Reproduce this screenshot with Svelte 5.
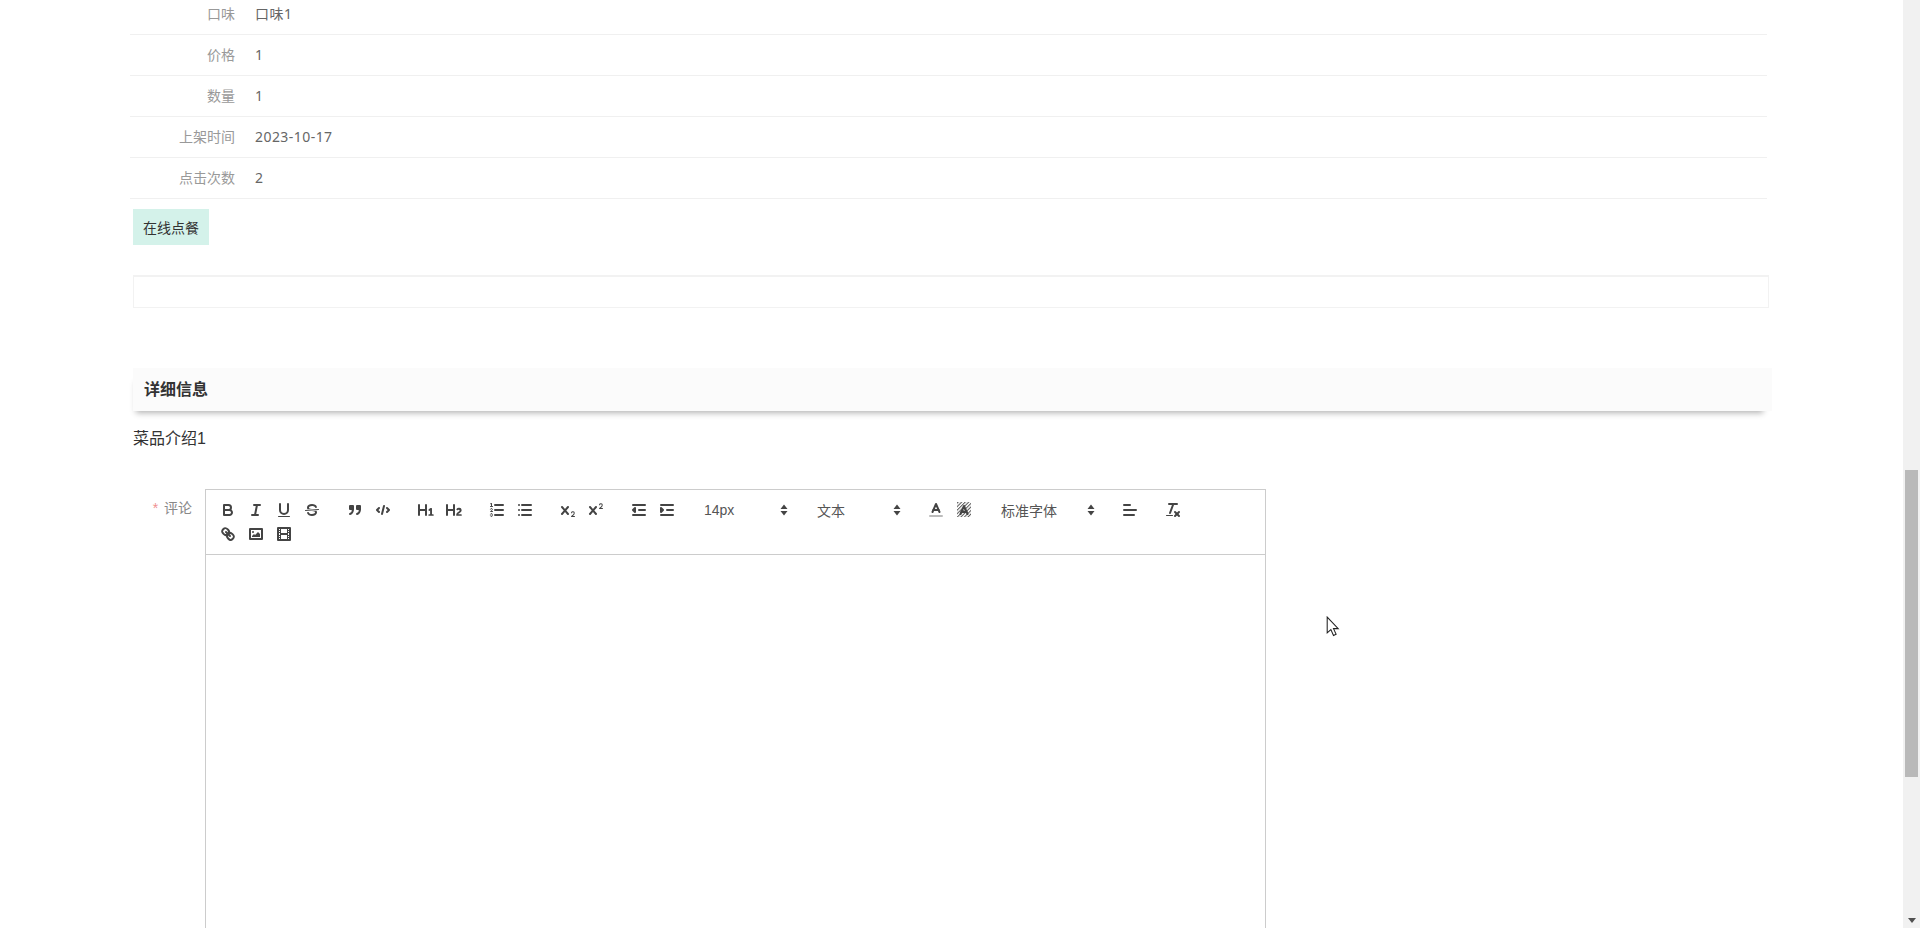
<script>
  const rows = [
    { label: '口味', value: '口味1' },
    { label: '价格', value: '1' },
    { label: '数量', value: '1' },
    { label: '上架时间', value: '2023-10-17' },
    { label: '点击次数', value: '2' }
  ];
</script>

<div class="page">
  <main class="content">
    <section class="detail-table">
      {#each rows as row}
        <div class="row">
          <span class="row-label">{row.label}</span>
          <span class="row-value">{row.value}</span>
        </div>
      {/each}
    </section>

    <button class="order-btn">在线点餐</button>
    <div class="empty-box"></div>

    <h3 class="section-title">详细信息</h3>
    <p class="intro">菜品介绍1</p>

    <div class="form-item">
      <label class="form-label"><span class="star">*</span> 评论</label>
      <div class="editor">
        <div class="toolbar">
          <span class="formats">
            <button class="tool" aria-label="bold"><svg viewBox="0 0 18 18"><path class="st" d="M5,4H9.5A2.5,2.5,0,0,1,12,6.5v0A2.5,2.5,0,0,1,9.5,9H5A0,0,0,0,1,5,9V4A0,0,0,0,1,5,4Z"/><path class="st" d="M5,9h5.5A2.5,2.5,0,0,1,13,11.5v0A2.5,2.5,0,0,1,10.5,14H5a0,0,0,0,1,0,0V9A0,0,0,0,1,5,9Z"/></svg></button>
            <button class="tool" aria-label="italic"><svg viewBox="0 0 18 18"><line class="st" x1="7" x2="13" y1="4" y2="4"/><line class="st" x1="5" x2="11" y1="14" y2="14"/><line class="st" x1="8" x2="10" y1="14" y2="4"/></svg></button>
            <button class="tool" aria-label="underline"><svg viewBox="0 0 18 18"><path class="st" d="M5,3V9a4.012,4.012,0,0,0,4,4H9a4.012,4.012,0,0,0,4-4V3"/><rect class="fl" height="1" rx="0.5" ry="0.5" width="12" x="3" y="15"/></svg></button>
            <button class="tool" aria-label="strike"><svg viewBox="0 0 18 18"><line class="st thin" x1="15.5" x2="2.5" y1="8.5" y2="9.5"/><path class="fl" d="M9.007,8C6.542,7.791,6,7.519,6,6.5,6,5.792,7.283,5,9,5c1.571,0,2.765.679,2.969,1.309a1,1,0,0,0,1.9-.617C13.356,4.106,11.354,3,9,3,6.2,3,4,4.538,4,6.5a3.2,3.2,0,0,0,.5,1.843Z"/><path class="fl" d="M8.984,10C11.457,10.208,12,10.479,12,11.5c0,.708-1.283,1.5-3,1.5-1.571,0-2.765-.679-2.969-1.309a1,1,0,1,0-1.9.617C4.644,13.894,6.646,15,9,15c2.8,0,5-1.538,5-3.5a3.2,3.2,0,0,0-.5-1.843Z"/></svg></button>
          </span>
          <span class="formats">
            <button class="tool" aria-label="blockquote"><svg viewBox="0 0 18 18"><rect class="fl st" height="3" width="3" x="4" y="5"/><rect class="fl st" height="3" width="3" x="11" y="5"/><path class="st" d="M7,8c0,4.031-3,5-3,5"/><path class="st" d="M14,8c0,4.031-3,5-3,5"/></svg></button>
            <button class="tool" aria-label="code"><svg viewBox="0 0 18 18"><polyline class="st" points="5 7 3 9 5 11"/><polyline class="st" points="13 7 15 9 13 11"/><line class="st" x1="10" x2="8" y1="5" y2="13"/></svg></button>
          </span>
          <span class="formats">
            <button class="tool" aria-label="h1"><svg viewBox="0 0 18 18"><path class="fl" d="M10,4V14a1,1,0,0,1-2,0V10H3v4a1,1,0,0,1-2,0V4A1,1,0,0,1,3,4V8H8V4a1,1,0,0,1,2,0Zm6.06787,9.209H14.98975V7.59863a.54085.54085,0,0,0-.605-.60547h-.62744a1.01119,1.01119,0,0,0-.748.29688L11.645,8.56641a.5435.5435,0,0,0-.022.8584l.28613.30762a.53861.53861,0,0,0,.84717.0332l.09912-.08789a1.2137,1.2137,0,0,0,.2417-.35254h.02246s-.01123.30859-.01123.60547V13.209H12.041a.54085.54085,0,0,0-.605.60547v.43945a.54085.54085,0,0,0,.605.60547h4.02686a.54085.54085,0,0,0,.605-.60547v-.43945A.54085.54085,0,0,0,16.06787,13.209Z"/></svg></button>
            <button class="tool" aria-label="h2"><svg viewBox="0 0 18 18"><path class="fl" d="M16.73975,13.81445v.43945a.54085.54085,0,0,1-.605.60547H11.855a.58392.58392,0,0,1-.64893-.60547V14.0127c0-2.90527,3.39941-3.42187,3.39941-4.55469a.77675.77675,0,0,0-.84717-.78125,1.17684,1.17684,0,0,0-.83594.38477c-.2749.26367-.561.374-.85791.13184l-.4292-.34082c-.30811-.24219-.38525-.51758-.1543-.81445a2.97155,2.97155,0,0,1,2.45361-1.17676,2.45393,2.45393,0,0,1,2.68408,2.40918c0,2.45312-3.1792,2.92676-3.27832,3.93848h2.79443A.54085.54085,0,0,1,16.73975,13.81445ZM9,3A.99974.99974,0,0,0,8,4V8H3V4A1,1,0,0,0,1,4V14a1,1,0,0,0,2,0V10H8v4a1,1,0,0,0,2,0V4A.99974.99974,0,0,0,9,3Z"/></svg></button>
          </span>
          <span class="formats">
            <button class="tool" aria-label="ordered"><svg viewBox="0 0 18 18"><line class="st" x1="7" x2="15" y1="4" y2="4"/><line class="st" x1="7" x2="15" y1="9" y2="9"/><line class="st" x1="7" x2="15" y1="14" y2="14"/><line class="st thin" x1="2.5" x2="4.5" y1="5.5" y2="5.5"/><path class="fl" d="M3.5,6A0.5,0.5,0,0,1,3,5.5V3.085l-0.276.138A0.5,0.5,0,0,1,2.053,3c-0.124-.247-0.023-0.324.224-0.447l1-.5A0.5,0.5,0,0,1,4,2.5v3A0.5,0.5,0,0,1,3.5,6Z"/><path class="st thin" d="M4.5,10.5h-2c0-.234,1.85-1.076,1.85-2.234A0.959,0.959,0,0,0,2.5,8.156"/><path class="st thin" d="M2.5,14.846a0.959,0.959,0,0,0,1.85-.109A0.7,0.7,0,0,0,3.75,14a0.688,0.688,0,0,0,.6-0.736,0.959,0.959,0,0,0-1.85-.109"/></svg></button>
            <button class="tool" aria-label="bullet"><svg viewBox="0 0 18 18"><line class="st" x1="6" x2="15" y1="4" y2="4"/><line class="st" x1="6" x2="15" y1="9" y2="9"/><line class="st" x1="6" x2="15" y1="14" y2="14"/><line class="st" x1="3" x2="3" y1="4" y2="4"/><line class="st" x1="3" x2="3" y1="9" y2="9"/><line class="st" x1="3" x2="3" y1="14" y2="14"/></svg></button>
          </span>
          <span class="formats">
            <button class="tool" aria-label="sub"><svg viewBox="0 0 18 18"><path class="fl" d="M15.5,15H13.861a3.858,3.858,0,0,0,1.914-2.975,1.8,1.8,0,0,0-1.6-1.751A1.921,1.921,0,0,0,12.021,11.7a0.50013,0.50013,0,1,0,.957.291h0a0.914,0.914,0,0,1,1.053-.725,0.81,0.81,0,0,1,.744.762c0,1.076-1.16971,1.86982-1.93971,2.43082A1.45639,1.45639,0,0,0,12,15.5a0.5,0.5,0,0,0,.5.5h3A0.5,0.5,0,0,0,15.5,15Z"/><path class="fl" d="M9.65,5.241a1,1,0,0,0-1.409.108L6,7.964,3.759,5.349A1,1,0,0,0,2.192,6.59178Q2.21541,6.6213,2.241,6.649L4.684,9.5,2.241,12.35A1,1,0,0,0,3.71,13.70722q0.02557-.02768.049-0.05722L6,11.036,8.241,13.65a1,1,0,1,0,1.567-1.24277Q9.78459,12.3777,9.759,12.35L7.316,9.5,9.759,6.651A1,1,0,0,0,9.65,5.241Z"/></svg></button>
            <button class="tool" aria-label="super"><svg viewBox="0 0 18 18"><path class="fl" d="M15.5,7H13.861a4.015,4.015,0,0,0,1.914-2.975,1.8,1.8,0,0,0-1.6-1.751A1.922,1.922,0,0,0,12.021,3.7a0.5,0.5,0,1,0,.957.291,0.917,0.917,0,0,1,1.053-.725,0.81,0.81,0,0,1,.744.762c0,1.077-1.164,1.925-1.934,2.486A1.423,1.423,0,0,0,12,7.5a0.5,0.5,0,0,0,.5.5h3A0.5,0.5,0,0,0,15.5,7Z"/><path class="fl" d="M9.651,5.241a1,1,0,0,0-1.41.108L6,7.964,3.759,5.349a1,1,0,1,0-1.519,1.3L4.683,9.5,2.241,12.35a1,1,0,1,0,1.519,1.3L6,11.036,8.241,13.65a1,1,0,0,0,1.519-1.3L7.317,9.5,9.759,6.651A1,1,0,0,0,9.651,5.241Z"/></svg></button>
          </span>
          <span class="formats">
            <button class="tool" aria-label="outdent"><svg viewBox="0 0 18 18"><line class="st" x1="3" x2="15" y1="14" y2="14"/><line class="st" x1="3" x2="15" y1="4" y2="4"/><line class="st" x1="9" x2="15" y1="9" y2="9"/><polyline class="st" points="5 7 5 11 3 9 5 7"/></svg></button>
            <button class="tool" aria-label="indent"><svg viewBox="0 0 18 18"><line class="st" x1="3" x2="15" y1="14" y2="14"/><line class="st" x1="3" x2="15" y1="4" y2="4"/><line class="st" x1="9" x2="15" y1="9" y2="9"/><polyline class="fl st" points="3 7 3 11 5 9 3 7"/></svg></button>
          </span>
          <span class="formats">
            <span class="picker size">14px<svg class="updown" viewBox="0 0 8 12"><path d="M4 0.5 7.5 5H0.5Z M4 11.5 0.5 7H7.5Z"/></svg></span>
          </span>
          <span class="formats">
            <span class="picker size">文本<svg class="updown" viewBox="0 0 8 12"><path d="M4 0.5 7.5 5H0.5Z M4 11.5 0.5 7H7.5Z"/></svg></span>
          </span>
          <span class="formats">
            <button class="tool" aria-label="color"><svg viewBox="0 0 18 18"><line class="st under" x1="3" x2="15" y1="15" y2="15"/><polyline class="st" points="5.5 11 9 3 12.5 11"/><line class="st" x1="11.63" x2="6.38" y1="9" y2="9"/></svg></button>
            <button class="tool" aria-label="background"><svg viewBox="0 0 18 18"><defs><pattern id="stipple" width="2.5" height="2.5" patternUnits="userSpaceOnUse" patternTransform="rotate(45)"><rect width="1" height="2.5" fill="#555"/></pattern></defs><rect x="2" y="1" width="14" height="15" fill="url(#stipple)"/><polyline class="st" points="5.5 13 9 5 12.5 13"/><line class="st" x1="11.63" x2="6.38" y1="11" y2="11"/></svg></button>
          </span>
          <span class="formats">
            <span class="picker font">标准字体<svg class="updown" viewBox="0 0 8 12"><path d="M4 0.5 7.5 5H0.5Z M4 11.5 0.5 7H7.5Z"/></svg></span>
          </span>
          <span class="formats">
            <button class="tool" aria-label="align"><svg viewBox="0 0 18 18"><line class="st" x1="3" x2="15" y1="9" y2="9"/><line class="st" x1="3" x2="13" y1="14" y2="14"/><line class="st" x1="3" x2="9" y1="4" y2="4"/></svg></button>
          </span>
          <span class="formats">
            <button class="tool" aria-label="clean"><svg viewBox="0 0 18 18"><line class="st" x1="5" x2="13" y1="3" y2="3"/><line class="st" x1="6" x2="9.35" y1="12" y2="3"/><line class="st" x1="11" x2="15" y1="11" y2="15"/><line class="st" x1="15" x2="11" y1="11" y2="15"/><rect class="fl" height="1" rx="0.5" ry="0.5" width="7" x="2" y="14"/></svg></button>
          </span>
          <span class="formats">
            <button class="tool" aria-label="link"><svg viewBox="0 0 18 18"><line class="st" x1="7" x2="11" y1="7" y2="11"/><path class="st" d="M8.9,4.577a3.476,3.476,0,0,1,.36,4.679A3.476,3.476,0,0,1,4.577,8.9C3.185,7.5,2.035,6.4,4.217,4.217S7.5,3.185,8.9,4.577Z"/><path class="st" d="M13.423,9.1a3.476,3.476,0,0,0-4.679-.36,3.476,3.476,0,0,0,.36,4.679c1.392,1.392,2.5,2.542,4.679.36S14.815,10.5,13.423,9.1Z"/></svg></button>
            <button class="tool" aria-label="image"><svg viewBox="0 0 18 18"><rect class="st" height="10" width="12" x="3" y="4"/><circle class="fl" cx="6" cy="7" r="1"/><polyline class="fl" points="5 12 5 11 7 9 8 10 11 7 13 9 13 12 5 12"/></svg></button>
            <button class="tool" aria-label="video"><svg viewBox="0 0 18 18"><rect class="st" height="12" width="12" x="3" y="3"/><rect class="fl" height="12" width="1" x="5" y="3"/><rect class="fl" height="12" width="1" x="12" y="3"/><rect class="fl" height="2" width="8" x="5" y="8"/><rect class="fl" height="1" width="3" x="3" y="5"/><rect class="fl" height="1" width="3" x="3" y="7"/><rect class="fl" height="1" width="3" x="3" y="10"/><rect class="fl" height="1" width="3" x="3" y="12"/><rect class="fl" height="1" width="3" x="12" y="5"/><rect class="fl" height="1" width="3" x="12" y="7"/><rect class="fl" height="1" width="3" x="12" y="10"/><rect class="fl" height="1" width="3" x="12" y="12"/></svg></button>
          </span>
        </div>
        <div class="editor-body"></div>
      </div>
    </div>
  </main>

  <!-- browser scrollbar and pointer lie over the page -->
  <div class="scrollbar">
    <div class="thumb"></div>
    <svg class="arrow-down" viewBox="0 0 8 5"><path d="M0 0H8L4 5Z"/></svg>
  </div>
  <svg class="cursor" viewBox="0 0 14 20"><path d="M1 1V16L4.5 13L7 18.5L9.5 17.3L7 12H11.5Z" fill="#fff" stroke="#222" stroke-width="1"/></svg>
</div>

<style>
  :global(body) {
    margin: 0;
    background: #fff;
    overflow: hidden;
  }

  .page {
    position: relative;
    height: 928px;
    overflow: hidden;
    font-family: "Liberation Sans", "Noto Sans CJK SC", sans-serif;
    font-size: 14px;
  }

  .content {
    width: 1636px;
    margin-left: 133px;
    margin-top: -6px;
    display: flex;
    flex-direction: column;
    align-items: flex-start;
  }

  .detail-table {
    width: 1637px;
    margin-left: -3px;
  }

  .row {
    display: flex;
    align-items: center;
    height: 38px;
    padding-bottom: 2px;
    border-bottom: 1px solid #f0f0f0;
  }

  .row-label {
    width: 105px;
    text-align: right;
    color: #999;
    font-size: 14px;
  }

  .row-value {
    margin-left: 20px;
    color: #666;
    font-family: "Noto Sans", "Noto Sans CJK SC", sans-serif;
    font-size: 14px;
    letter-spacing: 0.45px;
  }

  .order-btn {
    margin-top: 10px;
    width: 76px;
    height: 36px;
    padding: 0;
    border: none;
    background: #d4f2ea;
    color: #333;
    font: inherit;
    font-size: 14px;
  }

  .empty-box {
    width: 1634px;
    height: 30px;
    margin-top: 30px;
    border: 1px solid #f2f2f2;
    border-top-width: 2px;
  }

  .section-title {
    width: 1628px;
    height: 43px;
    margin: 60px 0 0;
    padding-left: 11px;
    line-height: 43px;
    background: #fbfbfb;
    box-shadow: -3px 8px 6px -6px rgba(0, 0, 0, 0.3);
    color: #333;
    font-size: 16px;
    font-weight: bold;
  }

  .intro {
    margin: 16px 0 0;
    color: #333;
    font-size: 16px;
    line-height: 24px;
  }

  .form-item {
    display: flex;
    margin-top: 38px;
  }

  .form-label {
    width: 59px;
    padding-right: 13px;
    text-align: right;
    color: #888;
    font-size: 14px;
    line-height: 38px;
    height: 38px;
  }

  .star {
    color: #f09090;
    margin-right: 2px;
  }

  .editor {
    width: 1061px;
  }

  .toolbar {
    display: flex;
    flex-wrap: wrap;
    border: 1px solid #ccc;
    padding: 8px;
  }

  .formats {
    display: flex;
    margin-right: 15px;
  }

  .tool {
    width: 28px;
    height: 24px;
    padding: 3px 5px;
    border: none;
    background: none;
  }

  .tool svg {
    display: block;
    width: 18px;
    height: 18px;
  }

  .st {
    fill: none;
    stroke: #444;
    stroke-width: 2;
    stroke-linecap: round;
    stroke-linejoin: round;
  }

  .st.thin {
    stroke-width: 1;
  }

  .st.under {
    stroke: #bbb;
  }

  .fl {
    fill: #444;
  }

  .st.fl {
    fill: #444;
  }

  .picker {
    display: flex;
    align-items: center;
    justify-content: space-between;
    box-sizing: border-box;
    height: 24px;
    padding: 0 6px 0 8px;
    color: #555;
    font-size: 14px;
  }

  .picker.size {
    width: 98px;
  }

  .picker.font {
    width: 108px;
  }

  .updown {
    width: 8px;
    height: 12px;
    fill: #444;
  }

  .editor-body {
    height: 600px;
    border: 1px solid #ccc;
    border-top: none;
  }

  .scrollbar {
    position: absolute;
    top: 0;
    right: 0;
    width: 17px;
    height: 928px;
    background: #f1f1f1;
  }

  .thumb {
    position: absolute;
    top: 470px;
    left: 2px;
    width: 13px;
    height: 307px;
    background: #b9b9b9;
  }

  .arrow-down {
    position: absolute;
    left: 5px;
    bottom: 5px;
    width: 8px;
    height: 5px;
    fill: #505050;
  }

  .cursor {
    position: absolute;
    left: 1326px;
    top: 616px;
    width: 15px;
    height: 21px;
  }
</style>
